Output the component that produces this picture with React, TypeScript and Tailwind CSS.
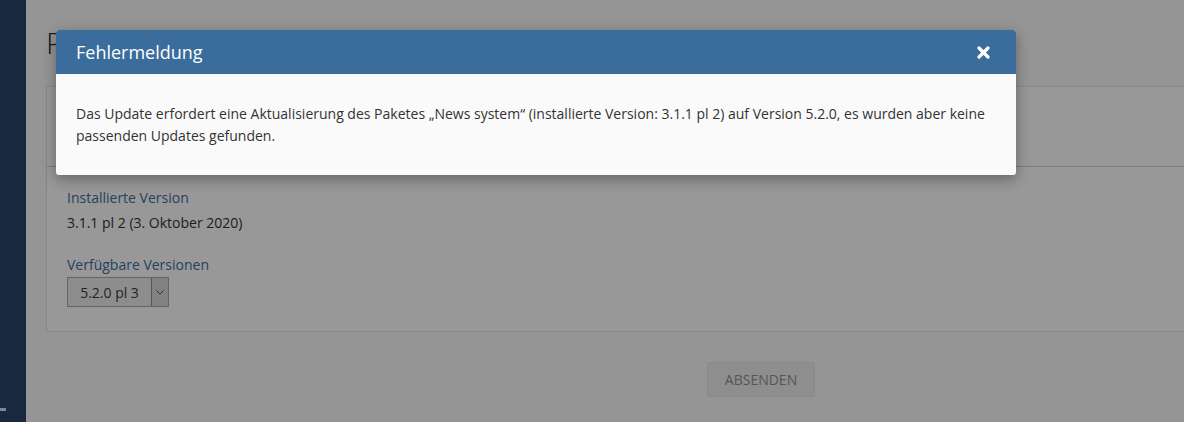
import React from "react";

const font = { fontFamily: '"Open Sans", "Noto Sans", sans-serif' };

const App = () => {
  return (
    <div className="relative flex h-[422px] w-[1184px] overflow-hidden bg-[#f9f9f9]" style={font}>
      {/* Sidebar */}
      <aside className="flex w-[26px] shrink-0 flex-col justify-end bg-[#27446a] pb-[11px]">
        <div className="h-[3px] w-[6px] bg-[#d8dde4]" />
      </aside>

      {/* Seite */}
      <main className="w-[1450px] shrink-0 px-5 pt-[24px]">
        <h1 className="text-[30px] font-light leading-[38px] text-[#2d2d2d]">Paketaktualisierung</h1>

        <section className="mt-[24px] h-[246px] w-[1430px] border border-[#e2e2e2] bg-[#fdfdfd]">
          <div className="h-[80px] border-b border-[#d2d2d2]" />
          <div className="px-5 pt-[21px] text-[14px]">
            <div className="leading-[20px] text-[#3d6d9d]">Installierte Version</div>
            <div className="mt-[5px] leading-[20px] text-[#333]">3.1.1 pl 2 (3. Oktober 2020)</div>
            <div className="mt-[22px] leading-[20px] text-[#3d6d9d]">Verfügbare Versionen</div>
            <div className="mt-[2px] flex h-[30px] w-[102px] border border-[#a9a9a9] bg-[#ececec]">
              <span className="flex flex-1 items-center justify-center text-[14px] text-[#3a3a3a]">5.2.0 pl 3</span>
              <span className="flex w-[17px] items-center justify-center border-l border-[#8a8a8a] bg-[#d8d8d8]">
                <svg width="8" height="5" viewBox="0 0 8 5">
                  <path d="M0.5 0.5 L4 4 L7.5 0.5" fill="none" stroke="#555" strokeWidth="1" />
                </svg>
              </span>
            </div>
          </div>
        </section>

        <div className="mt-[30px] flex w-[1430px] justify-center">
          <button className="h-[35px] w-[108px] rounded-[2px] border border-[#e4e4e4] bg-[#ededed] text-[14px] text-[#8f8f8f]">
            ABSENDEN
          </button>
        </div>
      </main>

      {/* Overlay */}
      <div className="absolute inset-0 bg-black/40" />

      {/* Dialog */}
      <div className="absolute left-[56px] top-[30px] w-[960px] rounded-[3px] bg-[#fafafa] shadow-[0_4px_14px_rgba(0,0,0,0.35)]">
        <div className="flex h-[44px] items-center justify-between rounded-t-[3px] bg-[#3a6d9c] pl-5 pr-[26px]">
          <span className="text-[18px] leading-none text-white">Fehlermeldung</span>
          <svg width="13" height="13" viewBox="0 0 13 13">
            <path d="M2 2 L11 11 M11 2 L2 11" stroke="#fff" strokeWidth="3.2" strokeLinecap="round" />
          </svg>
        </div>
        <div className="h-[101px] px-5 pt-[29px] text-[14px] leading-[22px] text-[#333]">
          Das Update erfordert eine Aktualisierung des Paketes „News system“ (installierte Version: 3.1.1 pl 2) auf
          Version 5.2.0, es wurden aber keine passenden Updates gefunden.
        </div>
      </div>
    </div>
  );
};

export default App;
